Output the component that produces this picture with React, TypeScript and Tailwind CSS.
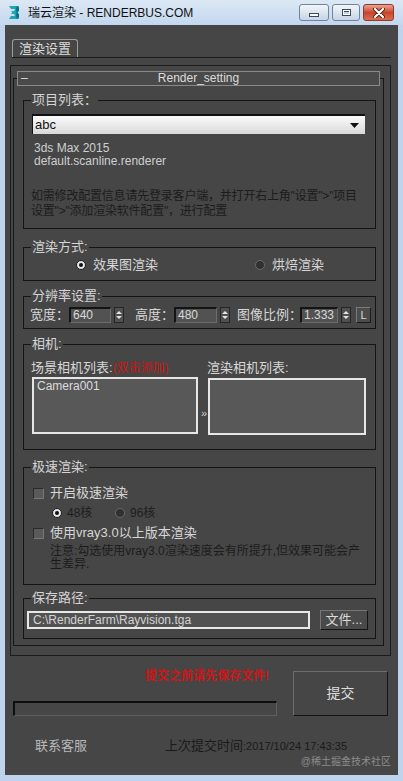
import React from "react";

const font = "font-['Liberation_Sans','Noto_Sans_CJK_SC',sans-serif]";

function Logo() {
  return (
    <svg width="13" height="15" viewBox="0 0 13 15">
      <path
        d="M2 1 H10 Q12 1 12 3 V5.5 L10.5 7.5 L12 9.5 V12 Q12 14 10 14 H2 L4 11 H8 L7 9 H4 L5.5 7.5 L4 6 H7 L8 4 H4 Z"
        fill="#1aa7b0"
      />
      <path d="M10 1 Q12 1 12 3 V5.5 L10.5 7.5 L12 9.5 V12 Q12 14 10 14 L9 11 L9.5 7.5 L9 4 Z" fill="#0d6f88" />
    </svg>
  );
}

function TitleBar() {
  return (
    <div className="h-[25px] flex items-start bg-gradient-to-b from-[#dce8f5] to-[#c3d7ee]">
      <div className="ml-[7px] mt-[5px]">
        <Logo />
      </div>
      <div className="ml-[8px] mt-[5px] text-[12px] leading-[16px] text-[#111] whitespace-nowrap">
        瑞云渲染 - RENDERBUS.COM
      </div>
      <div className="ml-auto mr-[9px] mt-[4px] flex gap-[3px]">
        <div className="w-[30px] h-[17px] rounded-[3px] border border-[#71839e] bg-gradient-to-b from-[#f2f6fb] to-[#c6d4e5] flex items-end justify-center pb-[3px]">
          <div className="w-[10px] h-[4px] bg-white border border-[#3c4a60]" />
        </div>
        <div className="w-[28px] h-[17px] rounded-[3px] border border-[#71839e] bg-gradient-to-b from-[#f2f6fb] to-[#c6d4e5] flex items-center justify-center">
          <div className="w-[9px] h-[7px] border border-[#3c4a60] bg-white flex items-center justify-center">
            <div className="w-[5px] h-[3px] bg-[#c9d4e2] border-t border-[#3c4a60]" />
          </div>
        </div>
        <div className="w-[31px] h-[17px] rounded-[3px] border border-[#8b3a2b] bg-gradient-to-b from-[#e9a591] via-[#c8452b] to-[#d96c52] flex items-center justify-center">
          <svg width="12" height="10" viewBox="0 0 12 10">
            <path d="M2 1 L10 9 M10 1 L2 9" stroke="#5a1c12" strokeWidth="4" strokeLinecap="round" />
            <path d="M2 1 L10 9 M10 1 L2 9" stroke="#ffffff" strokeWidth="2.2" strokeLinecap="round" />
          </svg>
        </div>
      </div>
    </div>
  );
}

function Group({ label, className, children }: { label: string; className: string; children: React.ReactNode }) {
  return (
    <fieldset className={`ml-[6px] w-[353px] border border-[#141414] ${className}`}>
      <legend className="ml-[7px] px-[1px] text-[13px] leading-[16px] text-[#d4d4d4]">{label}</legend>
      {children}
    </fieldset>
  );
}

function Spin({ ml = "ml-[3px]" }: { ml?: string }) {
  return (
    <div className={`${ml} w-[10px] h-[16px] bg-[#505050] border border-[#262626] flex flex-col items-center justify-center gap-[2px]`}>
      <svg width="6" height="3" viewBox="0 0 6 3">
        <path d="M0 3 L3 0 L6 3Z" fill="#e2e2e2" />
      </svg>
      <svg width="6" height="3" viewBox="0 0 6 3">
        <path d="M0 0 L3 3 L6 0Z" fill="#e2e2e2" />
      </svg>
    </div>
  );
}

function NumBox({ value, w }: { value: string; w: string }) {
  return (
    <div className={`${w} h-[16px] bg-[#525252] border-t-2 border-l-2 border-t-[#141414] border-l-[#141414] border-r border-b border-r-[#6c6c6c] border-b-[#6c6c6c] pl-[2px] text-[12px] leading-[13px] text-[#d8d8d8]`}>
      {value}
    </div>
  );
}

function Radio({ on }: { on: boolean }) {
  return on ? (
    <div className="w-[10px] h-[10px] rounded-full bg-[#e4e4e4] border border-[#1a1a1a] flex items-center justify-center shrink-0">
      <div className="w-[4px] h-[4px] rounded-full bg-[#111]" />
    </div>
  ) : (
    <div className="w-[10px] h-[10px] rounded-full bg-[#303030] border border-[#6a6a6a] shrink-0" />
  );
}

function Check() {
  return <div className="w-[11px] h-[11px] bg-[#5a5a5a] border border-t-[#2a2a2a] border-l-[#2a2a2a] border-r-[#777] border-b-[#777] shrink-0" />;
}

export default function App() {
  return (
    <div className={`w-[403px] h-[781px] bg-[#bfd4ec] flex flex-col ${font}`}>
      <TitleBar />
      <div className="mx-[5px] h-[750px] bg-[#464646] flex flex-col">
        {/* tab strip */}
        <div className="mt-[14px] mx-[7px] flex border-b border-[#1a1a1a]">
          <div className="h-[18px] w-[66px] border border-b-0 border-[#9c9c9c] rounded-t-[3px] flex items-center justify-center text-[13px] text-[#dcdcdc]">
            渲染设置
          </div>
        </div>

        {/* rollout panel */}
        <div className="mt-[7px] ml-[5px] mr-[7px] h-[591px] border border-[#1c1c1c] pt-[5px] pl-[2px]">
          <fieldset className="w-[371px] h-[575px] border border-[#161616] pl-[3px]">
            <legend className="w-[363px] h-[15px] border border-[#8a8a8a] bg-[#4a4a4a]">
              <div className="flex items-center h-full text-[12px] leading-[13px] text-[#dcdcdc]">
                <span className="w-[20px] pl-[3px]">–</span>
                <span className="flex-1 text-center pr-[20px]">Render_setting</span>
              </div>
            </legend>

            {/* 项目列表 */}
            <Group label="项目列表：" className="mt-[6px] h-[137px]">
              <div className="mt-[6px] ml-[8px] w-[333px] h-[20px] bg-gradient-to-b from-[#fbfbfb] to-[#d9d9d9] border-t-2 border-l border-[#111] flex items-center">
                <span className="pl-[2px] text-[13px] leading-[14px] text-[#111]">abc</span>
                <svg className="ml-auto mr-[6px]" width="9" height="5" viewBox="0 0 9 5">
                  <path d="M0 0 H9 L4.5 5Z" fill="#111" />
                </svg>
              </div>
              <div className="mt-[8px] ml-[10px] text-[12px] leading-[13px] text-[#cfcfcf]">
                <div>3ds Max 2015</div>
                <div>default.scanline.renderer</div>
              </div>
              <div className="mt-[21px] ml-[7px] text-[12px] leading-[15px] text-[#1c1c1c] whitespace-nowrap tracking-[-0.2px]">
                如需修改配置信息请先登录客户端，并打开右上角"设置"&gt;"项目
                <br />
                设置"&gt;"添加渲染软件配置"，进行配置
              </div>
            </Group>

            {/* 渲染方式 */}
            <Group label="渲染方式:" className="mt-[10px] h-[42px]">
              <div className="mt-[3px] h-[14px] flex items-center text-[13px] text-[#d6d6d6]">
                <div className="ml-[52px] w-[179px] flex items-center">
                  <Radio on />
                  <span className="ml-[7px] leading-[14px]">效果图渲染</span>
                </div>
                <div className="flex items-center">
                  <Radio on={false} />
                  <span className="ml-[7px] leading-[14px]">烘焙渲染</span>
                </div>
              </div>
            </Group>

            {/* 分辨率设置 */}
            <Group label="分辨率设置:" className="mt-[7px] h-[41px]">
              <div className="mt-[3px] h-[16px] flex items-center text-[13px] leading-[16px] text-[#d6d6d6] whitespace-nowrap">
                <span className="ml-[6px] w-[39px]">宽度：</span>
                <NumBox value="640" w="w-[42px]" />
                <Spin />
                <span className="ml-[11px] w-[39px]">高度：</span>
                <NumBox value="480" w="w-[43px]" />
                <Spin />
                <span className="ml-[7px] w-[63px]">图像比例：</span>
                <NumBox value="1.333" w="w-[38px]" />
                <Spin />
                <div className="ml-[5px] w-[15px] h-[16px] bg-[#4c4c4c] border border-t-[#7a7a7a] border-l-[#7a7a7a] border-r-[#1a1a1a] border-b-[#1a1a1a] flex items-center justify-center text-[11px] text-[#d8d8d8]">
                  L
                </div>
              </div>
            </Group>

            {/* 相机 */}
            <Group label="相机:" className="mt-[7px] h-[114px]">
              <div className="mt-[9px] flex">
                <div className="ml-[7px] w-[167px] flex flex-col">
                  <div className="h-[14px] text-[13px] leading-[14px] text-[#d6d6d6] whitespace-nowrap">
                    场景相机列表:<span className="text-[12px] text-[#cc1414]">(双击添加)</span>
                  </div>
                  <div className="mt-[2px] ml-[1px] w-[166px] h-[57px] border-2 border-[#e6e6e6] bg-[#585858] px-[3px] text-[12px] leading-[14px] text-[#dcdcdc]">
                    Camera001
                  </div>
                </div>
                <div className="w-[9px] flex items-center justify-end pt-[30px] text-[11px] text-[#d0d0d0]">»</div>
                <div className="flex flex-col">
                  <div className="h-[14px] text-[13px] leading-[14px] text-[#d6d6d6] whitespace-nowrap">渲染相机列表:</div>
                  <div className="mt-[3px] ml-[1px] w-[158px] h-[57px] border-2 border-[#e6e6e6] bg-[#585858]" />
                </div>
              </div>
            </Group>

            {/* 极速渲染 */}
            <Group label="极速渲染:" className="mt-[9px] h-[126px]">
              <div className="mt-[11px] ml-[9px] h-[14px] flex items-center">
                <Check />
                <span className="ml-[6px] text-[13px] leading-[14px] text-[#d6d6d6]">开启极速渲染</span>
              </div>
              <div className="mt-[6px] h-[14px] flex items-center text-[12px] leading-[14px] text-[#1e1e1e]">
                <div className="ml-[28px] w-[63px] flex items-center">
                  <Radio on />
                  <span className="ml-[5px]">48核</span>
                </div>
                <div className="flex items-center">
                  <Radio on={false} />
                  <span className="ml-[5px]">96核</span>
                </div>
              </div>
              <div className="mt-[6px] ml-[9px] h-[14px] flex items-center">
                <Check />
                <span className="ml-[6px] text-[13px] leading-[14px] text-[#d6d6d6] whitespace-nowrap">使用vray3.0以上版本渲染</span>
              </div>
              <div className="mt-[5px] ml-[26px] text-[12px] leading-[13px] text-[#1c1c1c] whitespace-nowrap">
                注意:勾选使用vray3.0渲染速度会有所提升,但效果可能会产
                <br />
                生差异.
              </div>
            </Group>

            {/* 保存路径 */}
            <Group label="保存路径:" className="mt-[5px] h-[49px]">
              <div className="mt-[5px] flex items-start">
                <div className="ml-[3px] w-[283px] h-[18px] border-2 border-[#e8e8e8] bg-[#525252] pl-[4px] text-[12px] leading-[14px] text-[#d2d2d2]">
                  C:\RenderFarm\Rayvision.tga
                </div>
                <div className="ml-[10px] -mt-[1px] w-[48px] h-[20px] bg-[#4a4a4a] border border-t-[#767676] border-l-[#767676] border-r-[#151515] border-b-[#151515] flex items-center justify-center text-[13px] text-[#dadada]">
                  文件...
                </div>
              </div>
            </Group>
          </fieldset>
        </div>

        {/* submit area */}
        <div className="flex pl-[8px]">
          <div className="w-[264px] flex flex-col">
            <div className="mt-[13px] h-[14px] pl-[132px] text-[12px] leading-[14px] font-bold text-[#d21414] whitespace-nowrap">
              提交之前请先保存文件!
            </div>
            <div className="mt-[18px] h-[15px] border-t-2 border-l-2 border-[#0e0e0e] border-r border-b border-r-[#5e5e5e] border-b-[#5e5e5e]" />
          </div>
          <div className="ml-[16px] mt-[15px] w-[95px] h-[45px] border border-t-[#6e6e6e] border-l-[#6e6e6e] border-r-[#141414] border-b-[#141414] flex items-center justify-center text-[14px] text-[#dedede]">
            提交
          </div>
        </div>

        <div className="mt-[22px] h-[16px] flex items-center pl-[30px]">
          <span className="w-[130px] text-[13px] leading-[16px] text-[#b8b8b8]">联系客服</span>
          <span className="text-[13px] leading-[16px] text-[#1a1a1a] whitespace-nowrap">
            上次提交时间<span className="text-[11px]">:2017/10/24 17:43:35</span>
          </span>
        </div>
        <div className="mt-[3px] flex justify-end pr-[7px] text-[10px] leading-[10px] text-[#8c8c8c]">@稀土掘金技术社区</div>
      </div>
    </div>
  );
}
